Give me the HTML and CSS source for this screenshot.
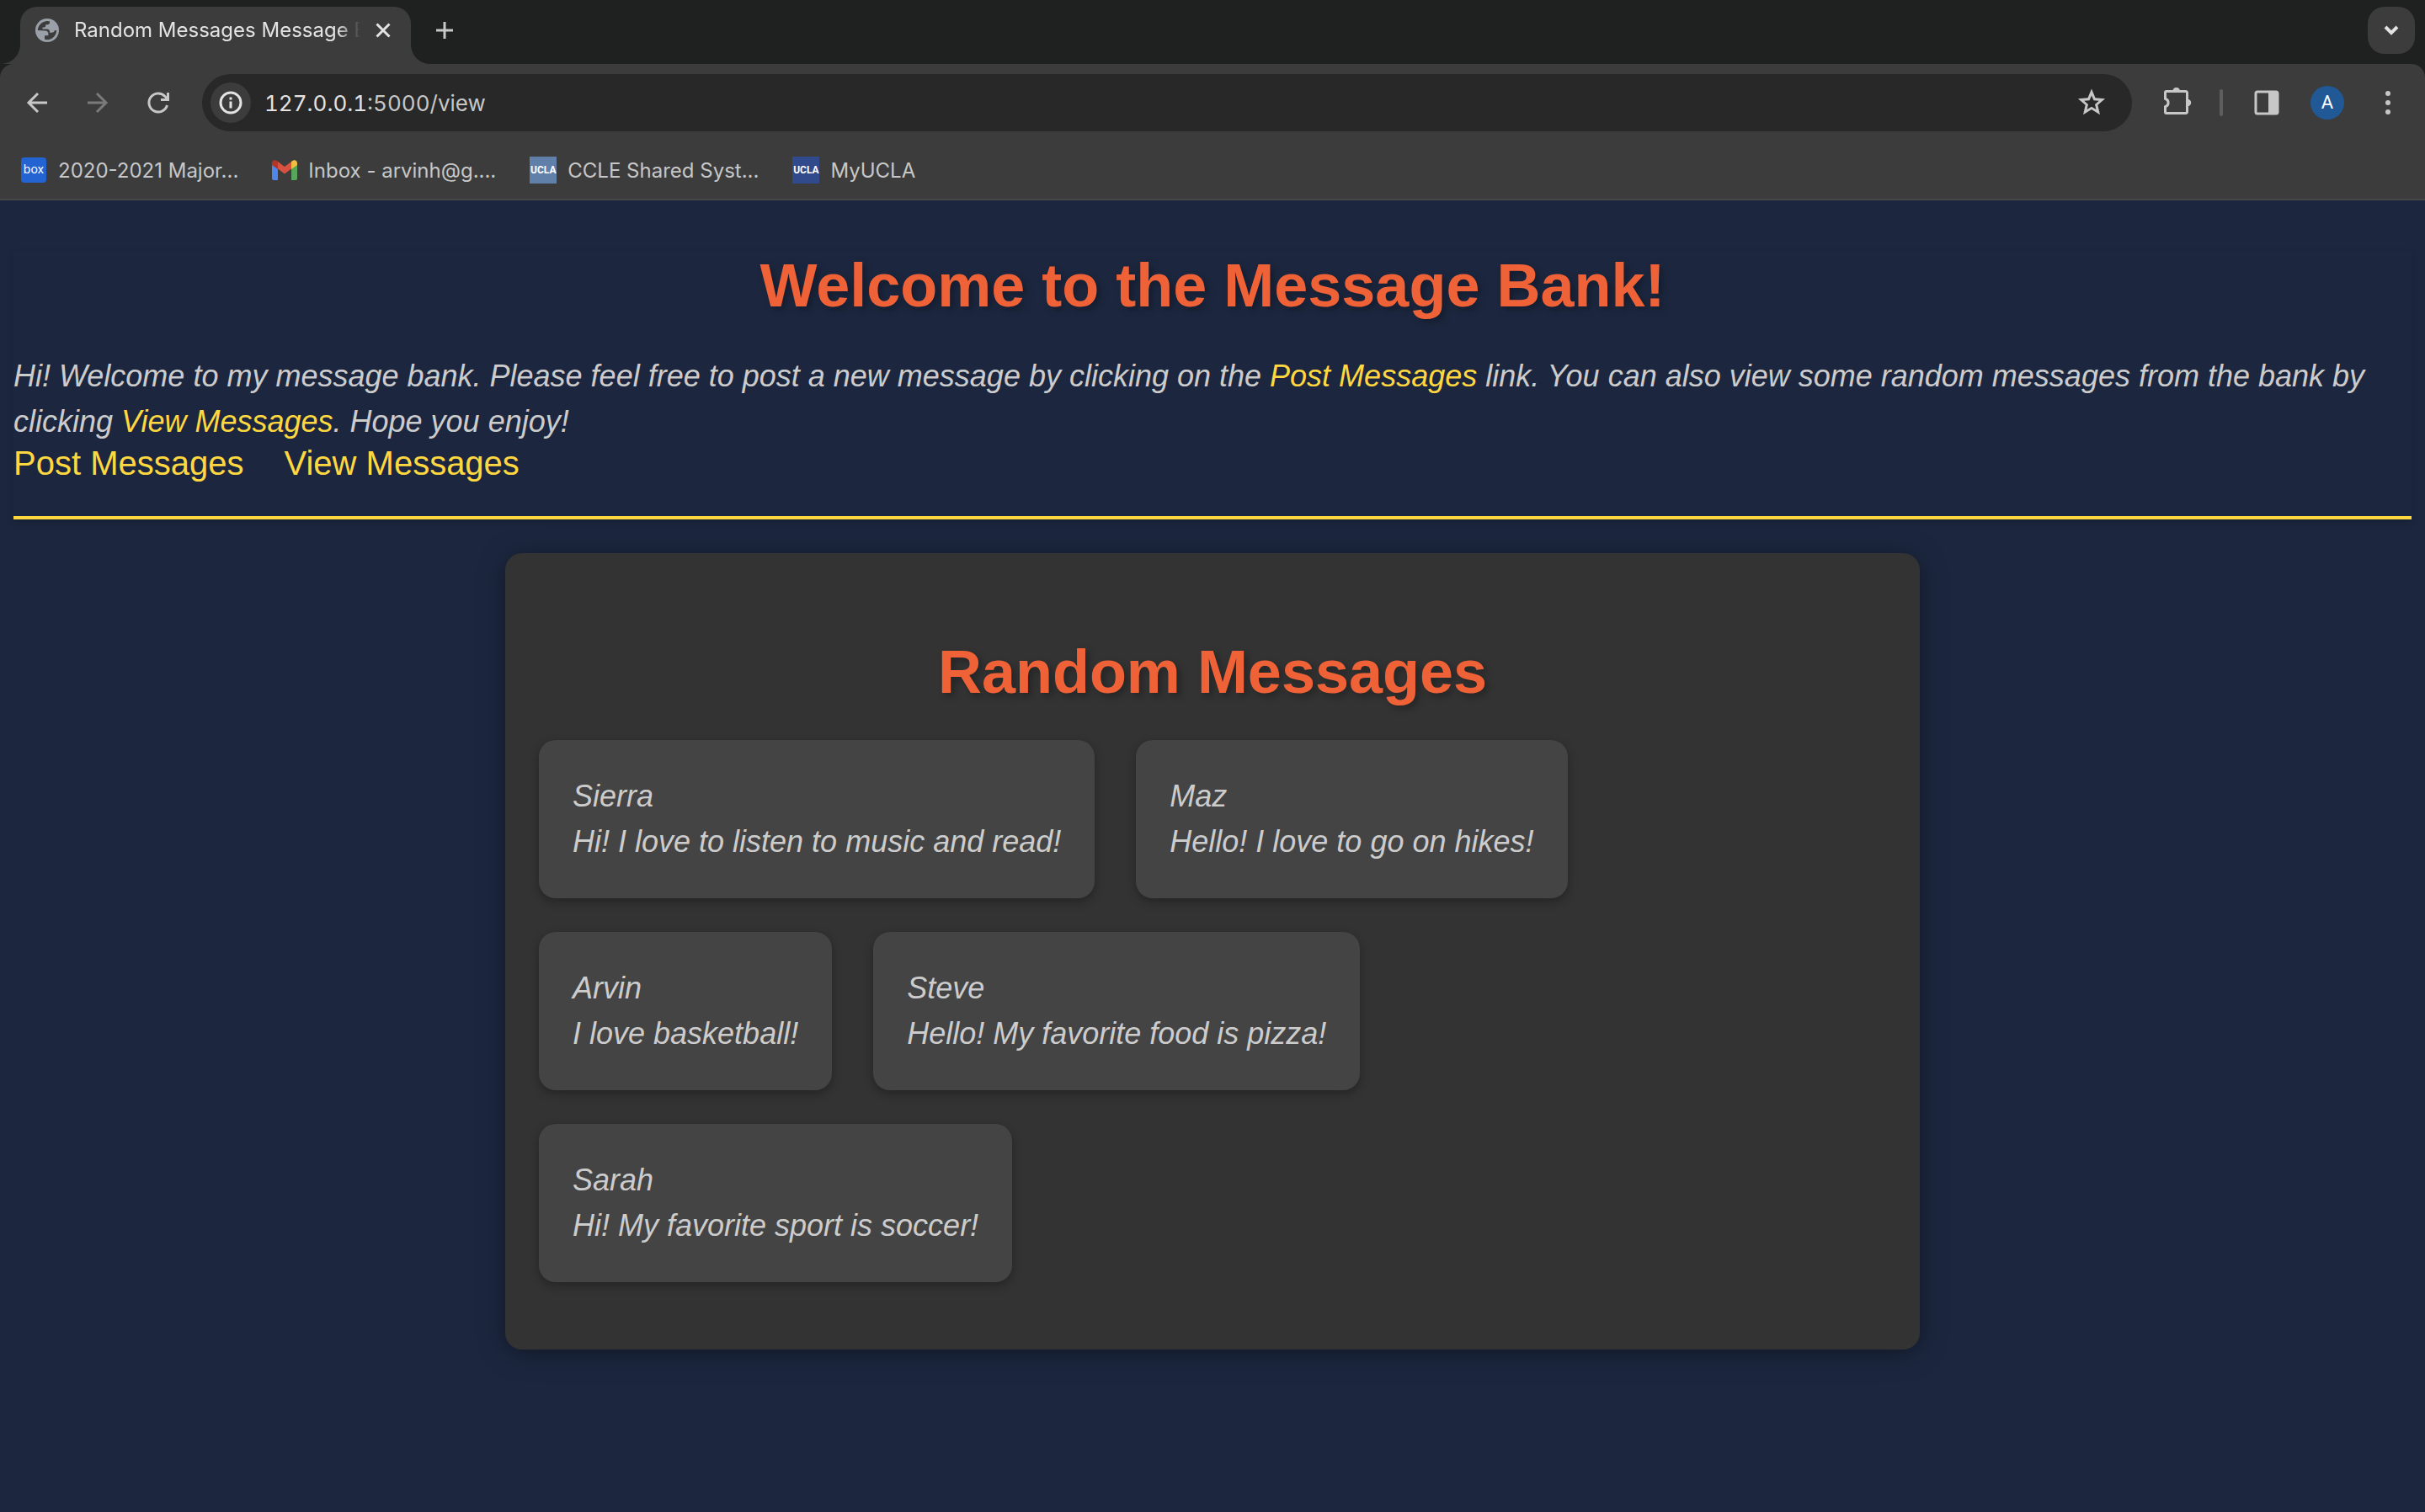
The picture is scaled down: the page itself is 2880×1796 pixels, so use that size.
FILE: index.html
```
<!DOCTYPE html>
<html lang="en">
<head>
<meta charset="utf-8">
<title>Random Messages Message Bank</title>
<link rel="stylesheet" href="styles.css">
</head>
<body>
<header class="browser">
  <div class="tabstrip">
    <div class="tab">
      <svg class="tab-corner tab-corner-left" width="24" height="24" viewBox="0 0 24 24"><path d="M24 0v24H0C14 24 24 14 24 0z"/></svg>
      <svg class="globe" width="28" height="28" viewBox="0 0 28 28"><circle cx="14" cy="14" r="14"/><path class="globe-cut" d="M2.800 14C3 8.500 7.500 3.500 13.500 2.900l3.500.4v1.500c0 1.300-1 2.400-2.400 2.400h-2.400v1.600c0 1-.7 1.700-1.700 1.700H8.500v2h5c2.200 0 3.500 1.300 3.500 3v1.300h2.500c2 0 3-1 3.300-2.500l2.400-.3c0 5.600-4.800 11.200-11.200 11.200-1 0-2-.1-3-.4v-4.600h3c1 0 1.500-.7 1.500-1.500 0-2.500-1.200-4.300-3.700-4.300z"/></svg>
      <span class="tab-title">Random Messages Message Bank</span>
      <button class="icon-button tab-close" aria-label="Close tab"><svg width="18" height="18" viewBox="0 0 18 18"><path d="M1.500 1.500l15 15M16.500 1.500l-15 15"/></svg></button>
      <svg class="tab-corner tab-corner-right" width="24" height="24" viewBox="0 0 24 24"><path d="M0 0v24h24C10 24 0 14 0 0z"/></svg>
    </div>
    <button class="icon-button new-tab" aria-label="New tab"><svg width="20" height="20" viewBox="0 0 20 20"><path d="M10 0v20M0 10h20"/></svg></button>
    <button class="icon-button tab-search" aria-label="Search tabs"><svg width="18" height="12" viewBox="0 0 18 12"><path d="M2 2l7 7 7-7"/></svg></button>
  </div>
  <div class="chrome-panel">
    <div class="toolbar">
      <div class="history">
        <button class="icon-button" aria-label="Back"><svg width="32" height="32" viewBox="0 0 32 32"><path d="M28 16H6M17 5L6 16l11 11"/></svg></button>
        <button class="icon-button disabled" aria-label="Forward"><svg width="32" height="32" viewBox="0 0 32 32"><path d="M4 16h22M15 5l11 11-11 11"/></svg></button>
        <button class="icon-button" aria-label="Reload"><svg width="32" height="32" viewBox="0 0 32 32"><path d="M26.500 19A11 11 0 1 1 24 8.500l3 3M27.500 4v8.500H19"/></svg></button>
      </div>
      <div class="omnibox">
        <button class="icon-button site-info" aria-label="Site information"><svg width="28" height="28" viewBox="0 0 28 28"><circle cx="14" cy="14" r="12"/><path d="M14 12.500v8M14 7.500v3"/></svg></button>
        <div class="url"><span class="host">127.0.0.1</span>:5000/view</div>
        <button class="icon-button" aria-label="Bookmark this tab"><svg width="34" height="34" viewBox="0 0 34 34"><path class="solid" fill-rule="evenodd" d="M17 0.500l4.500 10.700 11.600 1-8.800 7.600 2.700 11.400-10-6.100-10 6.100 2.700-11.400-8.800-7.600 11.600-1zM17 8.500l-2.500 5.800-6.300.5 4.800 4.100-1.500 6.200 5.500-3.300 5.500 3.300-1.500-6.200 4.800-4.100-6.300-.5z"/></svg></button>
      </div>
      <div class="actions">
        <button class="icon-button" aria-label="Extensions"><svg width="36" height="36" viewBox="0 0 36 36"><path d="M5 4.500h23a1.500 1.500 0 0 1 1.500 1.500v23a1.500 1.500 0 0 1-1.500 1.500H5A1.500 1.500 0 0 1 3.500 29v-6.200a5 5 0 0 0 0-9.600V6A1.500 1.500 0 0 1 5 4.500z"/><path class="solid" d="M12.500 4a4.200 4.200 0 0 1 8.400 0zM30 13.800a4.200 4.200 0 0 1 0 8.400z"/></svg></button>
        <span class="divider"></span>
        <button class="icon-button" aria-label="Side panel"><svg width="30" height="30" viewBox="0 0 30 30"><rect x="2" y="2" width="26" height="26" rx="2"/><path class="solid" d="M17 1h9a3 3 0 0 1 3 3v22a3 3 0 0 1-3 3h-9z"/></svg></button>
        <button class="avatar" aria-label="Profile">A</button>
        <button class="icon-button" aria-label="Menu"><svg width="8" height="28" viewBox="0 0 8 28"><g class="solid"><circle cx="4" cy="3" r="3"/><circle cx="4" cy="14" r="3"/><circle cx="4" cy="25" r="3"/></g></svg></button>
      </div>
    </div>
    <nav class="bookmarks" aria-label="Bookmarks">
      <a href="#"><span class="favicon box">box</span>2020-2021 Major...</a>
      <a href="#"><svg class="gmail" width="30" height="24" viewBox="0 0 30 24"><path fill="#4f86ec" d="M0 5l7 5v14H2a2 2 0 0 1-2-2z"/><path fill="#58a55c" d="M30 5l-7 5v14h5a2 2 0 0 0 2-2z"/><path fill="#d95140" d="M7 2l8 6 8-6v8.500l-8 6-8-6z"/><path fill="#f2bd42" d="M23 2c3-3 7-2 7 2v2l-7 5z"/><path fill="#b33629" d="M7 2C4-1 0 0 0 4v2l7 5z"/></svg>Inbox - arvinh@g....</a>
      <a href="#"><span class="favicon ccle">UCLA</span>CCLE Shared Syst...</a>
      <a href="#"><span class="favicon myucla">UCLA</span>MyUCLA</a>
    </nav>
  </div>
</header>
<main class="page">
  <div class="intro">
    <h1 class="title">Welcome to the Message Bank!</h1>
    <p class="lead">Hi! Welcome to my message bank. Please feel free to post a new message by clicking on the <a href="#">Post Messages</a> link. You can also view some random messages from the bank by clicking <a href="#">View Messages</a>. Hope you enjoy!</p>
    <nav class="links"><a href="#">Post Messages</a><a href="#">View Messages</a></nav>
  </div>
  <section class="board">
    <h1 class="title">Random Messages</h1>
    <ul class="messages">
      <li>Sierra<br>Hi! I love to listen to music and read!</li>
      <li>Maz<br>Hello! I love to go on hikes!</li>
      <li>Arvin<br>I love basketball!</li>
      <li>Steve<br>Hello! My favorite food is pizza!</li>
      <li>Sarah<br>Hi! My favorite sport is soccer!</li>
    </ul>
  </section>
</main>
</body>
</html>
```
FILE: styles.css
```
* { box-sizing: border-box; }

body {
  margin: 0;
  min-height: 100vh;
  background: #1c273f;
  color: #ccc;
  font-family: "Liberation Sans", Arial, sans-serif;
}

a { color: #ffd740; text-decoration: none; }

/* Browser frame */
.browser {
  background: #1f2120;
  font-family: Inter, Roboto, sans-serif;
}

.icon-button {
  display: flex;
  align-items: center;
  justify-content: center;
  padding: 0;
  border: 0;
  background: none;
  color: #c7c7c7;
}
.icon-button svg {
  fill: none;
  stroke: currentColor;
  stroke-width: 3;
}
.icon-button .solid { fill: currentColor; stroke: none; }
.icon-button.disabled { color: #7a7a7a; }

.tabstrip {
  display: flex;
  align-items: flex-start;
  height: 76px;
  padding: 8px 12px 0 24px;
}
.tab {
  position: relative;
  display: flex;
  align-items: center;
  width: 464px;
  height: 68px;
  padding: 0 24px 12px 18px;
  border-radius: 20px 20px 0 0;
  background: #3c3c3c;
}
.tab-corner { position: absolute; bottom: 0; fill: #3c3c3c; }
.tab-corner-left { right: 100%; }
.tab-corner-right { left: 100%; }
.globe { flex: none; fill: #9aa0a8; }
.globe-cut { fill: #3c3c3c; }
.tab-title {
  flex: 1;
  margin: 0 18px;
  overflow: hidden;
  color: #e3e3e3;
  font-size: 24px;
  line-height: 32px;
  white-space: nowrap;
  mask-image: linear-gradient(to right, #000 92%, transparent);
}
.icon-button.tab-close { color: #e3e3e3; }
.new-tab { width: 80px; height: 56px; }
.icon-button.tab-search {
  width: 56px;
  height: 56px;
  margin-left: auto;
  border-radius: 20px;
  background: #3c3c3c;
  color: #e3e3e3;
}
.tab-search svg { stroke-width: 4; }

.chrome-panel {
  border-bottom: 2px solid #474747;
  border-radius: 16px 16px 0 0;
  background: #3c3c3c;
}
.toolbar {
  display: flex;
  align-items: center;
  padding: 12px 40px 12px 28px;
}
.history { display: flex; gap: 40px; }
.omnibox {
  display: flex;
  flex: 1;
  align-items: center;
  height: 68px;
  margin: 0 36px;
  padding: 0 31px 0 10px;
  border-radius: 34px;
  background: #282828;
}
.icon-button.site-info {
  width: 48px;
  height: 48px;
  border-radius: 50%;
  background: #3c3c3c;
  color: #e3e3e3;
}
.url {
  flex: 1;
  margin-left: 16px;
  color: #c7c7c7;
  font-size: 26px;
  font-variant-numeric: tabular-nums;
}
.host { color: #e3e3e3; }
.actions { display: flex; align-items: center; }
.divider {
  width: 4px;
  height: 32px;
  margin: 0 37px 0 32px;
  border-radius: 2px;
  background: #5e5e5e;
}
.avatar {
  width: 40px;
  height: 40px;
  margin: 0 48px 0 37px;
  padding: 0;
  border: 0;
  border-radius: 50%;
  background: #215896;
  color: #fff;
  font: 22px/40px Roboto, sans-serif;
}

.bookmarks {
  display: flex;
  gap: 40px;
  padding: 16px 24px;
}
.bookmarks a {
  display: flex;
  align-items: center;
  gap: 13px;
  height: 36px;
  color: #c7c7c7;
  font-size: 24px;
}
.favicon {
  width: 32px;
  height: 32px;
  color: #fff;
  font: bold 12px/32px Roboto, sans-serif;
  text-align: center;
}
.box {
  width: 30px;
  height: 30px;
  margin: 0 1px;
  border-radius: 4px;
  background: #2364d2;
  font: 14px/28px Inter, sans-serif;
}
.ccle { background: #6180a9; }
.myucla { background: #314a8c; }

/* Message bank */
.page { display: flow-root; padding: 0 16px; }
.intro {
  margin-top: 60px;
  padding-bottom: 40px;
  border-bottom: 4px solid #ffd740;
  box-shadow: 0 4px 8px rgba(0, 0, 0, .2);
}
.title {
  margin: 0 0 40px;
  color: #ef6237;
  font-size: 72px;
  line-height: 82px;
  text-align: center;
  text-shadow: 4px 4px 8px rgba(0, 0, 0, .3);
}
.lead { margin: 0; font-size: 36px; font-style: italic; line-height: 54px; }
.links { display: flex; gap: 48px; font-size: 40px; line-height: 45px; }

.board {
  max-width: 1680px;
  margin: 40px auto;
  padding: 100px 40px 80px;
  border-radius: 20px;
  background: #333;
  box-shadow: 0 4px 32px rgba(0, 0, 0, .4);
}
.messages {
  display: flex;
  flex-wrap: wrap;
  gap: 40px 49px;
  margin: 0;
  padding: 0 40px 0 0;
  list-style: none;
}
.messages li {
  padding: 40px;
  border-radius: 20px;
  background: #444;
  box-shadow: 0 4px 12px rgba(0, 0, 0, .3);
  font-size: 36px;
  font-style: italic;
  line-height: 54px;
}
```
